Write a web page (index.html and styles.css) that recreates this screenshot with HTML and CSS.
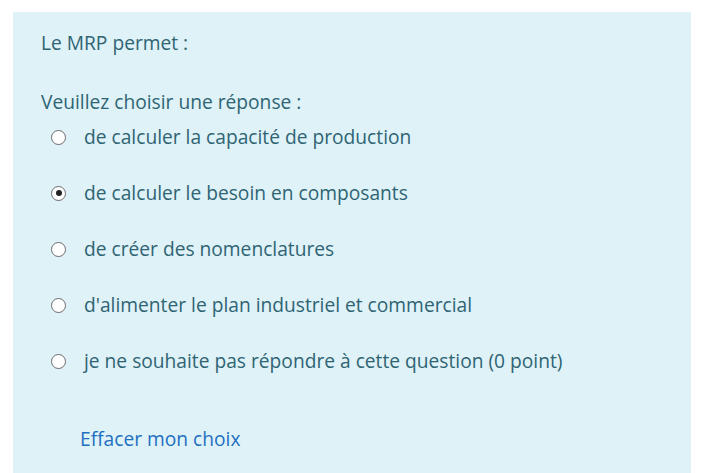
FILE: index.html
```html
<!DOCTYPE html>
<html lang="fr">
<head>
<meta charset="utf-8">
<link rel="stylesheet" href="styles.css">
</head>
<body>
<div class="que">
  <p class="qtext">Le MRP permet :</p>
  <p class="prompt">Veuillez choisir une réponse :</p>
  <div class="answers">
    <label class="opt"><span class="radio"></span><span class="lbl">de calculer la capacité de production</span></label>
    <label class="opt"><span class="radio checked"></span><span class="lbl">de calculer le besoin en composants</span></label>
    <label class="opt"><span class="radio"></span><span class="lbl">de créer des nomenclatures</span></label>
    <label class="opt"><span class="radio"></span><span class="lbl">d'alimenter le plan industriel et commercial</span></label>
    <label class="opt"><span class="radio"></span><span class="lbl">je ne souhaite pas répondre à cette question (0 point)</span></label>
  </div>
  <a class="clear" href="#">Effacer mon choix</a>
</div>
</body>
</html>
```
FILE: styles.css
```css
html, body { margin: 0; padding: 0; background: #fff; }
body {
  font-family: "Open Sans", "Noto Sans", sans-serif;
  font-size: 19.2px;
  line-height: 28px;
  color: #2f6473;
  overflow: hidden;
}
.que {
  margin: 12px 22px 0 13px;
  background: #def2f8;
  padding: 17px 28px 6px 28px;
  min-height: 461px;
  box-sizing: border-box;
}
.qtext { margin: 0; }
.prompt { margin: 31px 0 0 0; }
.answers { display: flex; flex-direction: column; gap: 28px; margin-top: 7px; padding-left: 10px; }
.opt { display: flex; align-items: center; gap: 18px; height: 28px; }
.radio {
  width: 13px; height: 13px;
  border: 1.5px solid #6b6b6b;
  border-radius: 50%;
  background: #fff;
  display: flex; align-items: center; justify-content: center;
  flex: none;
}
.radio.checked::after {
  content: ""; width: 6px; height: 6px; border-radius: 50%; background: #222;
}
.clear {
  display: inline-block;
  margin: 50px 0 0 39px;
  color: #1f70c1;
  text-decoration: none;
}
```
